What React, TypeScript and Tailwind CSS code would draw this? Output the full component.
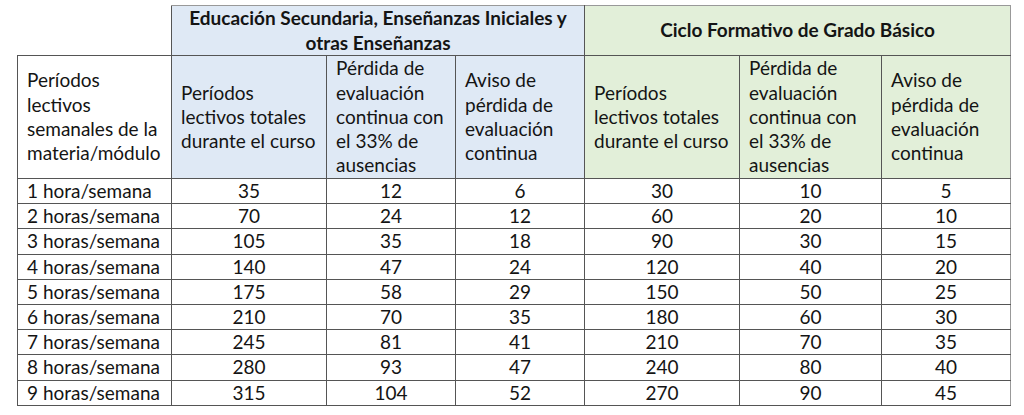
const rows = [
  ["1 hora/semana", 35, 12, 6, 30, 10, 5],
  ["2 horas/semana", 70, 24, 12, 60, 20, 10],
  ["3 horas/semana", 105, 35, 18, 90, 30, 15],
  ["4 horas/semana", 140, 47, 24, 120, 40, 20],
  ["5 horas/semana", 175, 58, 29, 150, 50, 25],
  ["6 horas/semana", 210, 70, 35, 180, 60, 30],
  ["7 horas/semana", 245, 81, 41, 210, 70, 35],
  ["8 horas/semana", 280, 93, 47, 240, 80, 40],
  ["9 horas/semana", 315, 104, 52, 270, 90, 45],
];

const subHeads = [
  "Períodos lectivos totales durante el curso",
  "Pérdida de evaluación continua con el 33% de ausencias",
  "Aviso de pérdida de evaluación continua",
];

export default function App() {
  return (
    <div className="h-[415px] w-[1024px] bg-white pl-[17px] pt-[5px] font-['Lato','Open_Sans',sans-serif] text-[19px] leading-[24.3px] text-[#141414]">
      <table className="w-[993px] table-fixed border-collapse">
        <colgroup>
          <col className="w-[154px]" />
          <col className="w-[155px]" />
          <col className="w-[129px]" />
          <col className="w-[129px]" />
          <col className="w-[155px]" />
          <col className="w-[142px]" />
          <col className="w-[129px]" />
        </colgroup>
        <thead>
          <tr className="h-[50px]">
            <th className="border-0 p-0" />
            <th
              colSpan={3}
              className="border border-[#555] border-t-[#999] bg-[#dfe9f5] px-2 text-center font-bold"
            >
              Educación Secundaria, Enseñanzas Iniciales y otras Enseñanzas
            </th>
            <th
              colSpan={3}
              className="border border-[#555] border-t-[#999] border-r-[#999] bg-[#e2efd9] px-2 text-center font-bold"
            >
              Ciclo Formativo de Grado Básico
            </th>
          </tr>
          <tr className="h-[123px]">
            <td className="border border-[#555] pl-[9px] pr-1 align-middle">
              Períodos lectivos semanales de la materia/módulo
            </td>
            {subHeads.map((t) => (
              <td key={"a" + t} className="border border-[#555] bg-[#dfe9f5] pl-[9px] pr-1 align-middle">
                {t}
              </td>
            ))}
            <td className="border border-[#555] bg-[#e2efd9] pl-[9px] pr-1 align-middle">{subHeads[0]}</td>
            <td className="border border-[#555] bg-[#e2efd9] pl-[9px] pr-[16px] align-middle">{subHeads[1]}</td>
            <td className="border border-[#555] border-r-[#999] bg-[#e2efd9] pl-[9px] pr-1 align-middle">
              {subHeads[2]}
            </td>
          </tr>
        </thead>
        <tbody>
          {rows.map((r) => (
            <tr key={r[0]} className="h-[25.2px]">
              <td className="border border-[#555] pl-[9px] leading-[22px]">{r[0]}</td>
              {r.slice(1).map((v, i) => (
                <td
                  key={i}
                  className={`border border-[#555] text-center leading-[22px] ${i === 5 ? "border-r-[#999]" : ""}`}
                >
                  {v}
                </td>
              ))}
            </tr>
          ))}
        </tbody>
      </table>
    </div>
  );
}
